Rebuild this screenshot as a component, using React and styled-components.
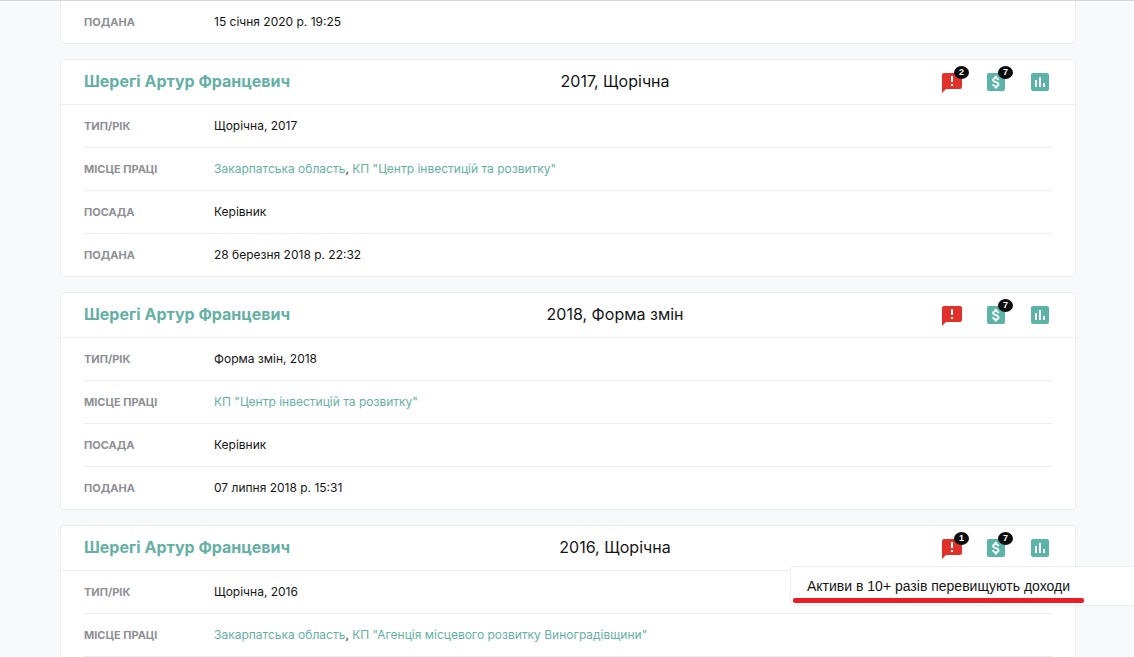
import React from "react";
import styled, { createGlobalStyle } from "styled-components";
import { MdInsertChart } from "react-icons/md";

const GlobalStyle = createGlobalStyle`
  *,
  *::before,
  *::after {
    box-sizing: border-box;
  }

  body {
    margin: 0;
    background: #f8f9fb;
    color: #151515;
    font-family: Inter, "Liberation Sans", sans-serif;
    font-size: 12px;
  }
`;

const Page = styled.main`
  display: flex;
  flex-direction: column;
  gap: 15px;
  height: 100vh;
  padding: 0 58px 0 60px;
  border-top: 1px solid #d5d6d8;
  overflow: hidden;
`;

const Card = styled.article`
  flex: none;
  background: #fff;
  border: 1px solid #ebedef;
  border-top-width: ${(props) => (props.$headless ? "0" : "1px")};
  border-radius: ${(props) => (props.$headless ? "0 0 4px 4px" : "4px")};
  padding-bottom: ${(props) => (props.$more ? "40px" : "0")};
`;

const CardHeader = styled.header`
  display: flex;
  justify-content: space-between;
  align-items: center;
  height: 45px;
  padding: 0 23px;
  border-bottom: 1px solid #ebedef;
`;

const Name = styled.a`
  padding-bottom: 2px;
  color: #64b0a4;
  font-size: 16px;
  font-weight: 700;
  line-height: 20px;
  text-decoration: none;
`;

const Title = styled.h2`
  margin: 0;
  padding-bottom: 2px;
  font-size: 16px;
  font-weight: 400;
  line-height: 20px;
`;

const Actions = styled.div`
  position: relative;
  display: flex;
  gap: 20px;
`;

const IconButton = styled.button`
  position: relative;
  width: 24px;
  height: 24px;
  padding: 0;
  border: 0;
  background: none;
  color: ${(props) => (props.$alert ? "#e0322b" : "#5cb3a7")};
  cursor: pointer;

  svg {
    display: block;
    width: 24px;
    height: 24px;
  }
`;

const Badge = styled.span`
  position: absolute;
  top: -4px;
  left: 14px;
  width: 15px;
  height: 13px;
  border-radius: 50%;
  background: #0c0c0c;
  color: #fff;
  font-size: 9px;
  font-weight: 700;
  line-height: 13px;
  text-align: center;
`;

const Tooltip = styled.div`
  position: absolute;
  top: 30px;
  left: -150px;
  z-index: 1;
  width: 400px;
  height: 40px;
  padding: 9px 16px;
  border: 1px solid #ebedef;
  border-radius: 4px;
  background: #fff;
  font-family: "Liberation Sans", Arial, sans-serif;
  font-size: 14px;
  line-height: 20px;
  white-space: nowrap;

  &::after {
    content: "";
    position: absolute;
    left: 2px;
    bottom: 2px;
    width: 291px;
    height: 5px;
    border-radius: 2px;
    background: #ec1c24;
  }
`;

const Rows = styled.dl`
  margin: 0;
  padding: 0 23px;
`;

const Row = styled.div`
  display: flex;
  align-items: center;
  height: 43px;
  border-bottom: 1px solid #ebedef;

  &:last-child {
    height: ${(props) => (props.$more ? "43px" : "42px")};
    border-bottom-width: ${(props) => (props.$more ? "1px" : "0")};
  }
`;

const Label = styled.dt`
  flex: none;
  width: 130px;
  color: #8d9094;
  font-size: 11px;
  font-weight: 700;
  text-transform: uppercase;
`;

const Value = styled.dd`
  margin: 0;
  line-height: 18px;
`;

const PlaceLink = styled.a`
  color: #64b0a4;
  text-decoration: none;
`;

const AlertIcon = () => (
  <svg viewBox="0 0 24 24" aria-hidden="true">
    <path
      fill="currentColor"
      d="M4 3h16a2 2 0 0 1 2 2v12a2 2 0 0 1-2 2H6l-4 4V5a2 2 0 0 1 2-2z"
    />
    <path fill="#fff" d="M11 6h2v6h-2zM11 14h2v2h-2z" />
  </svg>
);

const MoneyIcon = () => (
  <svg viewBox="0 0 24 24" aria-hidden="true">
    <rect x="3" y="3" width="18" height="18" rx="2" fill="currentColor" />
    <path
      fill="#fff"
      stroke="#fff"
      strokeWidth=".6"
      transform="translate(4 4) scale(.68)"
      d="M11.8 10.9c-2.27-.59-3-1.2-3-2.15 0-1.09 1.01-1.85 2.7-1.85 1.78 0 2.44.85 2.5 2.1h2.21c-.07-1.72-1.12-3.3-3.21-3.81V3h-3v2.16c-1.94.42-3.5 1.68-3.5 3.61 0 2.31 1.91 3.46 4.7 4.13 2.5.6 3 1.48 3 2.41 0 .69-.49 1.79-2.7 1.79-2.06 0-2.87-.92-2.98-2.1h-2.2c.12 2.19 1.76 3.42 3.68 3.83V21h3v-2.15c1.95-.37 3.5-1.5 3.5-3.55 0-2.84-2.43-3.81-4.7-4.4z"
    />
  </svg>
);

const declarations = [
  {
    id: 1,
    rows: [{ label: "Подана", text: "15 січня 2020 р. 19:25" }],
  },
  {
    id: 2,
    name: "Шерегі Артур Францевич",
    title: "2017, Щорічна",
    alerts: 2,
    money: 7,
    rows: [
      { label: "Тип/рік", text: "Щорічна, 2017" },
      {
        label: "Місце праці",
        links: ["Закарпатська область", 'КП "Центр інвестицій та розвитку"'],
      },
      { label: "Посада", text: "Керівник" },
      { label: "Подана", text: "28 березня 2018 р. 22:32" },
    ],
  },
  {
    id: 3,
    name: "Шерегі Артур Францевич",
    title: "2018, Форма змін",
    money: 7,
    rows: [
      { label: "Тип/рік", text: "Форма змін, 2018" },
      { label: "Місце праці", links: ['КП "Центр інвестицій та розвитку"'] },
      { label: "Посада", text: "Керівник" },
      { label: "Подана", text: "07 липня 2018 р. 15:31" },
    ],
  },
  {
    id: 4,
    name: "Шерегі Артур Францевич",
    title: "2016, Щорічна",
    alerts: 1,
    money: 7,
    tooltip: "Активи в 10+ разів перевищують доходи",
    more: true,
    rows: [
      { label: "Тип/рік", text: "Щорічна, 2016" },
      {
        label: "Місце праці",
        links: [
          "Закарпатська область",
          'КП "Агенція місцевого розвитку Виноградівщини"',
        ],
      },
    ],
  },
];

const Declaration = ({ item }) => (
  <Card $headless={!item.name} $more={item.more}>
    {item.name && (
      <CardHeader>
        <Name href="#">{item.name}</Name>
        <Title>{item.title}</Title>
        <Actions>
          <IconButton type="button" $alert>
            <AlertIcon />
            {item.alerts && <Badge>{item.alerts}</Badge>}
          </IconButton>
          <IconButton type="button">
            <MoneyIcon />
            {item.money && <Badge>{item.money}</Badge>}
          </IconButton>
          <IconButton type="button">
            <MdInsertChart />
          </IconButton>
          {item.tooltip && <Tooltip role="tooltip">{item.tooltip}</Tooltip>}
        </Actions>
      </CardHeader>
    )}
    <Rows>
      {item.rows.map((row) => (
        <Row key={row.label} $more={item.more}>
          <Label>{row.label}</Label>
          <Value>
            {row.text}
            {row.links &&
              row.links.map((link, i) => (
                <React.Fragment key={link}>
                  {i > 0 && ", "}
                  <PlaceLink href="#">{link}</PlaceLink>
                </React.Fragment>
              ))}
          </Value>
        </Row>
      ))}
    </Rows>
  </Card>
);

const App = () => (
  <>
    <GlobalStyle />
    <Page>
      {declarations.map((item) => (
        <Declaration key={item.id} item={item} />
      ))}
    </Page>
  </>
);

export default App;
